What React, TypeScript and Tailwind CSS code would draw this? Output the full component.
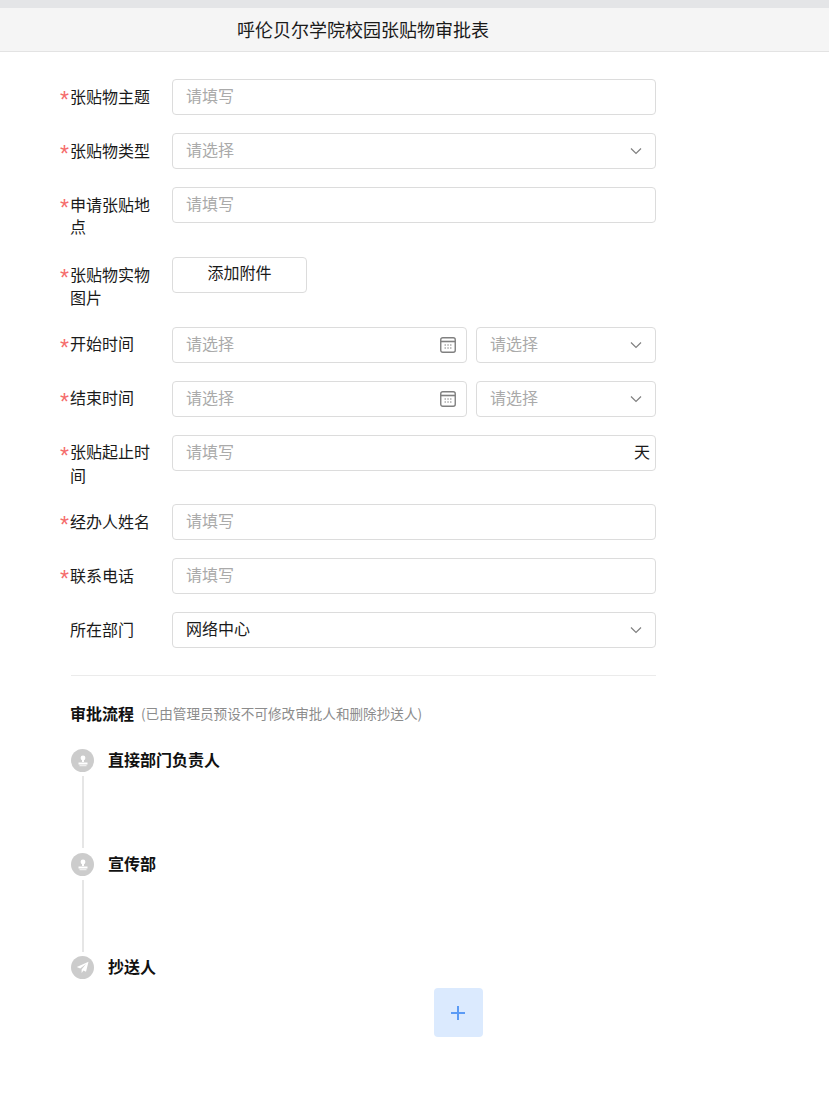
import React from 'react'

const labelClass = 'relative w-[112px] shrink-0 pl-[10px] pr-[16px] text-[16px] text-[#1a1a1a]'
const boxClass =
  'flex h-[36px] items-center rounded-[4px] border border-[#dcdcdc] bg-white text-[16px] leading-[22px]'

const Star = () => (
  <span className="absolute left-0 top-[10px] font-['Liberation_Sans',sans-serif] text-[23px] leading-[23px] text-[#f56c6c]">
    *
  </span>
)

const Chevron = () => (
  <svg width="12" height="8" viewBox="0 0 12 8" fill="none" className="shrink-0">
    <path d="M1 1.5 6 6.5 11 1.5" stroke="#808080" strokeWidth="1.2" />
  </svg>
)

const CalendarIcon = () => (
  <svg width="16" height="16" viewBox="0 0 16 16" fill="none" className="shrink-0">
    <rect x="0.75" y="0.75" width="14.5" height="14.5" rx="2" stroke="#808080" strokeWidth="1.4" />
    <path d="M1 4.5h14" stroke="#808080" strokeWidth="1.6" />
    <path d="M4.5 8h1.5M7.3 8h1.5M10 8h1.5M4.5 11h1.5M7.3 11h1.5M10 11h1.5" stroke="#808080" />
  </svg>
)

const StampIcon = () => (
  <svg width="12" height="12" viewBox="0 0 12 12" fill="white">
    <circle cx="6" cy="3" r="2.4" />
    <path d="M5 4.5h2v2.5H5z" />
    <path d="M1.5 7.5h9v2h-9z" />
    <path d="M2.5 10.2h7v1h-7z" opacity="0.8" />
  </svg>
)

const PlaneIcon = () => (
  <svg width="13" height="13" viewBox="0 0 13 13" fill="white">
    <path d="M12.5 0.8 0.8 6l3.4 1.6L10 3 5.6 8.6v3.4l1.9-2.5 2.5 1.3z" />
  </svg>
)

const Row: React.FC<{
  label: string
  required?: boolean
  rowClass?: string
  labelType?: string
  children: React.ReactNode
}> = ({ label, required = true, rowClass = 'mb-[18px]', labelType = 'pt-[6px] leading-[23px]', children }) => (
  <div className={`flex ${rowClass}`}>
    <div className={`${labelClass} ${labelType}`}>
      {required && <Star />}
      {label}
    </div>
    <div className="flex min-w-0 flex-1 gap-[9px]">{children}</div>
  </div>
)

const TextBox: React.FC<{ placeholder?: string; suffix?: string }> = ({
  placeholder = '请填写',
  suffix,
}) => (
  <div className={`${boxClass} w-full pl-[13px] pr-[5px]`}>
    <span className="flex-1 pb-[4px] text-[#aaaaaa]">{placeholder}</span>
    {suffix && <span className="pb-[4px] text-[#1a1a1a]">{suffix}</span>}
  </div>
)

const SelectBox: React.FC<{ value?: string; className?: string }> = ({ value, className = 'w-full' }) => (
  <div className={`${boxClass} ${className} pl-[13px] pr-[13px]`}>
    <span className={`flex-1 pb-[4px] ${value ? 'text-[#1a1a1a]' : 'text-[#aaaaaa]'}`}>
      {value || '请选择'}
    </span>
    <Chevron />
  </div>
)

const DateRow = () => (
  <>
    <div className={`${boxClass} w-[295px] pl-[13px] pr-[10px]`}>
      <span className="flex-1 pb-[4px] text-[#aaaaaa]">请选择</span>
      <CalendarIcon />
    </div>
    <SelectBox className="w-[180px]" />
  </>
)

const Step: React.FC<{ name: string; plane?: boolean; last?: boolean; heightClass?: string }> = ({
  name,
  plane,
  last,
  heightClass = 'h-[104px]',
}) => (
  <div className={`flex ${last ? '' : heightClass}`}>
    <div className="flex w-[23px] flex-col items-center">
      <div className="flex h-[23px] w-[23px] shrink-0 items-center justify-center rounded-full bg-[#cccccc]">
        {plane ? <PlaneIcon /> : <StampIcon />}
      </div>
      {!last && <div className="mt-[4px] h-[72px] w-[2px] bg-[#e6e6e6]" />}
    </div>
    <div className="ml-[14px] text-[16px] font-bold leading-[20px] text-[#111111]">{name}</div>
  </div>
)

export default function App() {
  return (
    <div className="min-h-[1104px] bg-white font-['Noto_Sans_CJK_SC','Microsoft_YaHei',sans-serif]">
      <div className="h-[8px] bg-[#e4e5e7]" />
      <div className="flex h-[44px] items-center border-b border-[#e3e3e3] bg-[#f5f5f5] pl-[237px] text-[18px] text-[#1a1a1a]">
        呼伦贝尔学院校园张贴物审批表
      </div>

      <div className="w-[656px] pl-[60px] pt-[27px]">
        <Row label="张贴物主题">
          <TextBox />
        </Row>
        <Row label="张贴物类型">
          <SelectBox />
        </Row>
        <Row label="申请张贴地点" rowClass="mb-[18px] h-[52px]" labelType="pt-[6px] leading-[22px]">
          <TextBox />
        </Row>
        <Row label="张贴物实物图片" rowClass="mb-[18px] h-[52px]">
          <div className={`${boxClass} w-[135px] justify-center pb-[7px] text-[#1a1a1a]`}>添加附件</div>
        </Row>
        <Row label="开始时间" labelType="pt-[5px] leading-[23px]">
          <DateRow />
        </Row>
        <Row label="结束时间" labelType="pt-[5px] leading-[23px]">
          <DateRow />
        </Row>
        <Row label="张贴起止时间" rowClass="mb-[18px] h-[51px]" labelType="pt-[4px] leading-[24px]">
          <TextBox suffix="天" />
        </Row>
        <Row label="经办人姓名">
          <TextBox />
        </Row>
        <Row label="联系电话">
          <TextBox />
        </Row>
        <Row label="所在部门" required={false} rowClass="">
          <SelectBox value="网络中心" />
        </Row>

        <div className="ml-[11px] mt-[27px] border-t border-[#ebebeb] pt-[24px]">
          <div className="flex items-center">
            <span className="-ml-px text-[16px] font-bold leading-[24px] text-[#111111]">审批流程</span>
            <span className="ml-[7px] pt-[1px] text-[13.6px] leading-[24px] text-[#8c8c8c]">
              (已由管理员预设不可修改审批人和删除抄送人)
            </span>
          </div>
          <div className="mt-[24px]">
            <Step name="直接部门负责人" />
            <Step name="宣传部" heightClass="h-[103px]" />
            <Step name="抄送人" plane last />
          </div>
        </div>
      </div>

      <div className="ml-[434px] mt-[9px] flex h-[49px] w-[49px] items-center justify-center rounded-[4px] bg-[#dbeafe]">
        <svg width="14" height="14" viewBox="0 0 14 14" fill="none" className="-ml-px">
          <path d="M7 0v14M0 7h14" stroke="#5b9bf5" strokeWidth="2" />
        </svg>
      </div>
    </div>
  )
}
